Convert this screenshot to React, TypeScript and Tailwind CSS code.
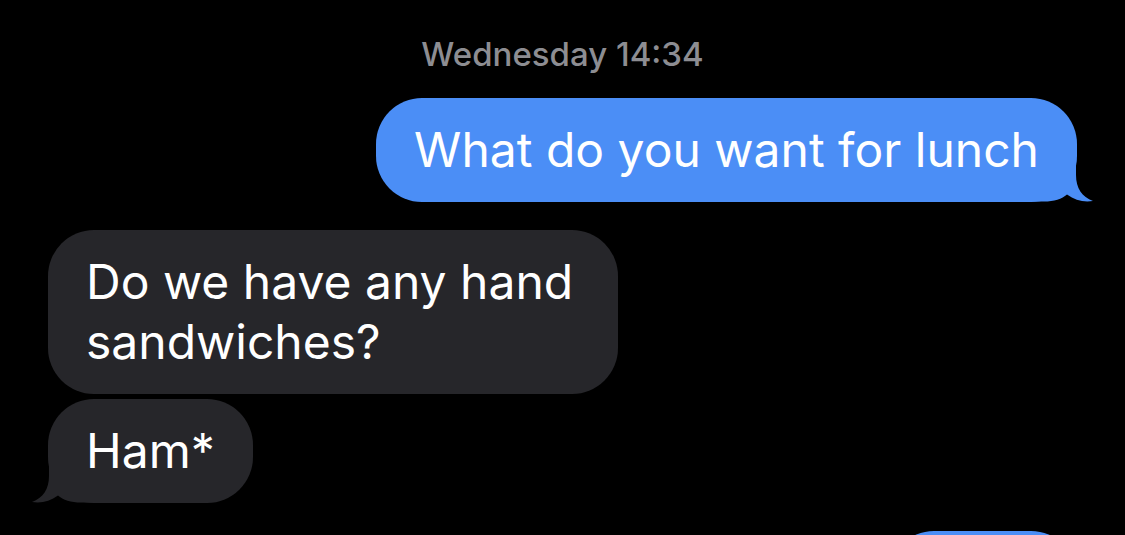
import React from 'react';

const BLUE = '#4b8ef6';
const GRAY = '#26262a';

// bubble tail, drawn for the right side; mirrored for incoming messages
const Tail = ({ color, side }: { color: string; side: 'left' | 'right' }) => (
  <svg
    width="64"
    height="47"
    viewBox="0 0 64 47"
    className={`absolute bottom-0 ${side === 'right' ? 'right-[-17px]' : 'left-[-17px] -scale-x-100'}`}
  >
    <path
      d="M0 0 H46 V20 C46 33 52 42 63 46 C54 47.5 45 45.5 37 39.5 C32 44 24 46.5 14 46.5 H0 Z"
      fill={color}
    />
  </svg>
);

const Bubble = ({
  text,
  mine,
  tail,
  className = '',
}: {
  text: React.ReactNode;
  mine?: boolean;
  tail?: boolean;
  className?: string;
}) => (
  <div
    className={`relative rounded-[46px] px-[38px] py-[22px] text-[48px] leading-[60px] text-white ${
      mine ? 'self-end bg-[#4b8ef6]' : 'self-start bg-[#26262a]'
    } ${className}`}
  >
    {tail && <Tail color={mine ? BLUE : GRAY} side={mine ? 'right' : 'left'} />}
    <span className="relative">{text}</span>
  </div>
);

export default function App() {
  return (
    <div
      className="h-[535px] w-[1125px] overflow-hidden bg-black px-12"
      style={{ fontFamily: 'Inter, "Noto Sans", sans-serif' }}
    >
      <div className="flex flex-col">
        <div className="pt-[26px] pb-[16px] text-center text-[33px] font-medium leading-[56px] text-[#8d8d92]">
          Wednesday 14:34
        </div>
        <Bubble mine tail text="What do you want for lunch" />
        <Bubble className="mt-[28px] max-w-[570px]" text="Do we have any hand sandwiches?" />
        <Bubble className="mt-[5px]" tail text="Ham*" />
        <Bubble className="mt-[28px]" mine tail text="Yeah" />
      </div>
    </div>
  );
}
